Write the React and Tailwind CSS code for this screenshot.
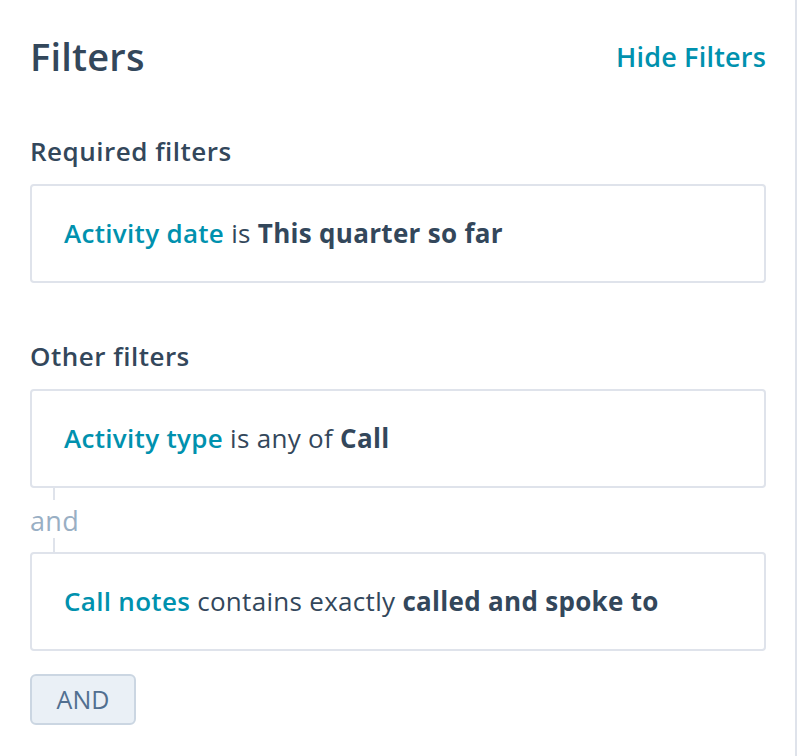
export default function App() {
  const font = { fontFamily: '"Open Sans", "Noto Sans", sans-serif' };
  return (
    <div className="w-[800px] h-[756px] bg-white flex" style={font}>
      <div className="w-[797px] h-full border-r-2 border-[#dfe3eb] pl-[30px] pr-[29px] text-[#33475b]">
        <div className="flex items-center justify-between pt-[32px] h-[80px]">
          <h1 className="text-[38px] font-semibold leading-none tracking-[0.2px]">Filters</h1>
          <button className="text-[27px] font-semibold text-[#0091ae] leading-none tracking-[0.2px]">Hide Filters</button>
        </div>
        <div className="mt-[53px] text-[26px] font-semibold leading-[36px] tracking-[0.5px]">Required filters</div>
        <div className="mt-[15px] h-[99px] border-2 border-[#dfe3eb] rounded-[4px] flex items-center px-[32px] text-[26px] tracking-[0.3px]">
          <span>
            <span className="text-[#0091ae] font-semibold">Activity date</span> is <span className="font-bold">This quarter so far</span>
          </span>
        </div>
        <div className="mt-[55px] text-[26px] font-semibold leading-[36px] tracking-[0.5px]">Other filters</div>
        <div className="mt-[15px] h-[99px] border-2 border-[#dfe3eb] rounded-[4px] flex items-center px-[32px] text-[26px] tracking-[0.3px]">
          <span>
            <span className="text-[#0091ae] font-semibold">Activity type</span> is any of <span className="font-bold">Call</span>
          </span>
        </div>
        <div className="relative h-[64px] flex items-center">
          <div className="absolute left-[23px] top-0 h-[12px] w-[2px] bg-[#dfe3eb]" />
          <span className="text-[27px] text-[#99afc4] leading-none tracking-[0.3px]">and</span>
          <div className="absolute left-[23px] bottom-0 h-[14px] w-[2px] bg-[#dfe3eb]" />
        </div>
        <div className="h-[99px] border-2 border-[#dfe3eb] rounded-[4px] flex items-center px-[32px] text-[26px] tracking-[0.3px]">
          <span>
            <span className="text-[#0091ae] font-semibold">Call notes</span> contains exactly <span className="font-bold">called and spoke to</span>
          </span>
        </div>
        <button className="mt-[23px] w-[106px] h-[51px] bg-[#eaf0f6] border-2 border-[#cbd6e2] rounded-[6px] text-[25px] text-[#516f90] flex items-center justify-center">
          AND
        </button>
      </div>
    </div>
  );
}
